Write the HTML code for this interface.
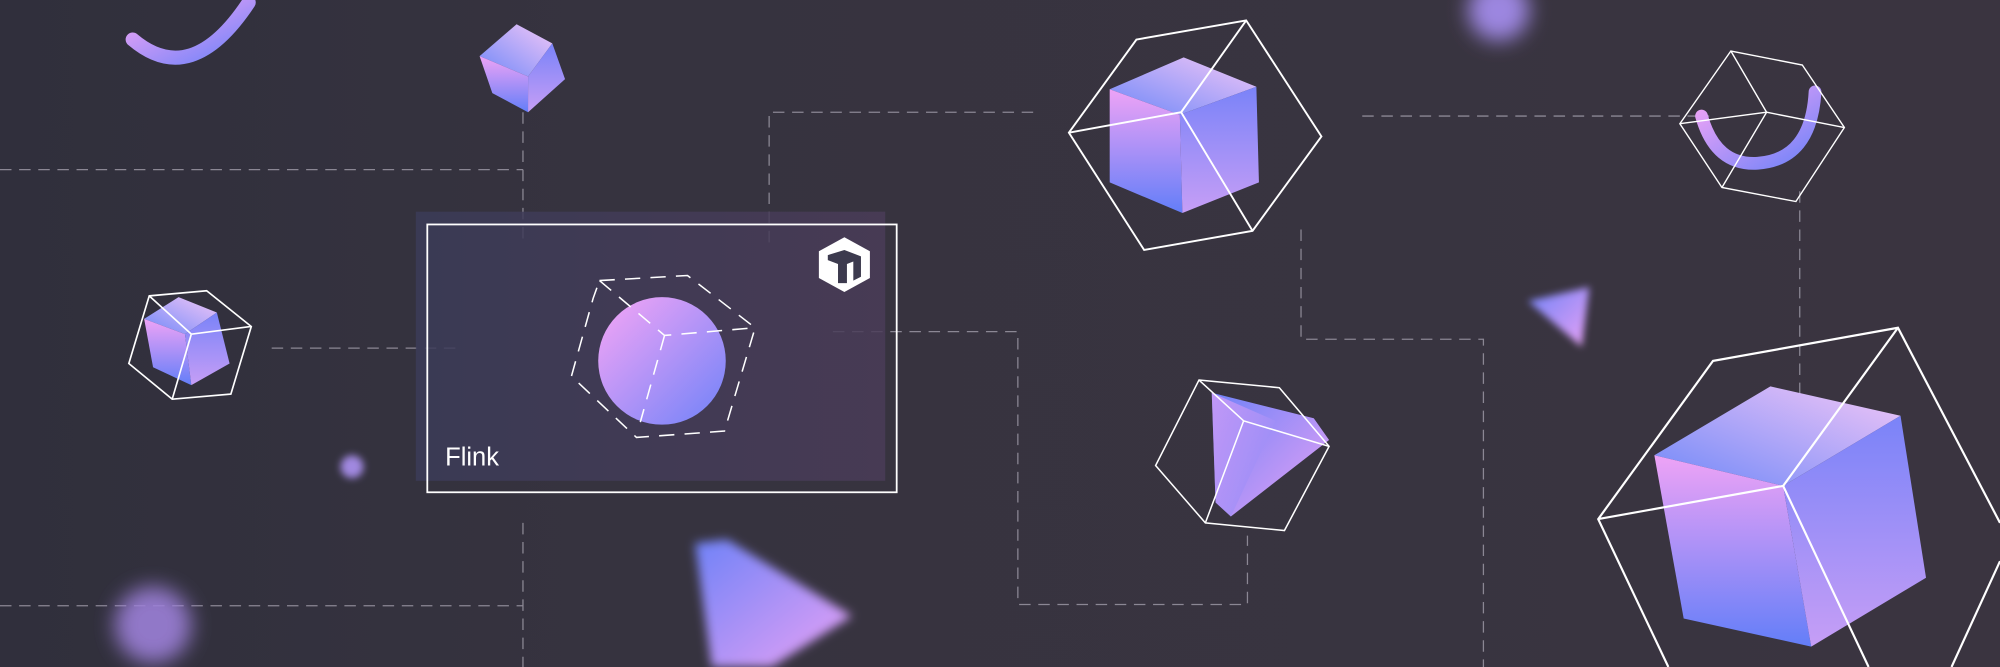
<!DOCTYPE html>
<html><head><meta charset="utf-8"><style>
html,body{margin:0;padding:0;width:2000px;height:667px;overflow:hidden;background:#37333f}
svg{display:block}
</style></head><body>
<svg width="2000" height="667" viewBox="0 0 1568 523" preserveAspectRatio="none" xmlns="http://www.w3.org/2000/svg">
<defs>
<linearGradient id="bg" x1="0" x2="1" y1="0" y2="0"><stop offset="0" stop-color="#302f3c"/><stop offset="0.3" stop-color="#36333f"/><stop offset="1" stop-color="#3a3440"/></linearGradient>
<linearGradient id="card" x1="0" x2="1"><stop offset="0" stop-color="#3b3b58"/><stop offset="1" stop-color="#4a3c58"/></linearGradient>
<linearGradient id="pb" x1="0" y1="0" x2="1" y2="1"><stop offset="0" stop-color="#f7a6f6"/><stop offset="1" stop-color="#6f82f8"/></linearGradient>
<linearGradient id="bp" x1="0" y1="0" x2="1" y2="1"><stop offset="0" stop-color="#6f82f8"/><stop offset="1" stop-color="#e9a2f5"/></linearGradient>
<linearGradient id="top" x1="0" y1="1" x2="1" y2="0"><stop offset="0" stop-color="#6f88f8"/><stop offset="1" stop-color="#f2c6f7"/></linearGradient>
<linearGradient id="lf" x1="0" y1="0" x2="0" y2="1"><stop offset="0" stop-color="#eea3f6"/><stop offset="1" stop-color="#637ef8"/></linearGradient>
<linearGradient id="rf" x1="0" y1="0" x2="0" y2="1"><stop offset="0" stop-color="#7a83f8"/><stop offset="1" stop-color="#c69ef6"/></linearGradient>
<filter id="b1" x="-1" y="-1" width="3" height="3"><feGaussianBlur stdDeviation="8"/></filter>
<filter id="b2" x="-1" y="-1" width="3" height="3"><feGaussianBlur stdDeviation="3"/></filter>
<filter id="b3" x="-1" y="-1" width="3" height="3"><feGaussianBlur stdDeviation="4"/></filter>
</defs>
<rect width="1568" height="523" fill="url(#bg)"/>
<g stroke="#8b8794" stroke-width="1" fill="none" stroke-dasharray="9 6">
<path d="M0 133H410M410 88V190M213 273H360M0 475H410M410 410V523"/>
<path d="M603 190V88H810"/>
<path d="M653 260H798V474H978V420"/>
<path d="M1020 180V266H1163V523"/>
<path d="M1068 91H1340M1411 150V310"/>
</g>
<!-- blobs -->
<circle cx="1175" cy="8" r="24" fill="#9c86e0" filter="url(#b1)"/>
<circle cx="120" cy="490" r="30" fill="#9c80d8" filter="url(#b1)" opacity="0.9"/>
<circle cx="276" cy="366" r="9" fill="#a088e0" filter="url(#b2)"/>
<polygon points="1198,236 1246,225 1240,272" fill="url(#bp)" filter="url(#b2)"/>
<polygon points="545,426 570,423 668,483 605,523 558,523" fill="url(#bp)" filter="url(#b3)"/>
<!-- top-left arc -->
<path d="M104 31 Q150 70 195 2" stroke="url(#pb)" stroke-width="11" fill="none" stroke-linecap="round"/>
<!-- small cube top -->
<polygon points="376,44 405,19 433,34 414,60" fill="url(#top)"/>
<polygon points="376,44 414,60 414,88 386,73" fill="url(#lf)"/>
<polygon points="414,60 433,34 443,62 414,88" fill="url(#rf)"/>
<!-- card -->
<rect x="326" y="166" width="368" height="211" fill="url(#card)" opacity="0.85"/>
<rect x="335" y="176" width="368" height="210" fill="none" stroke="#fff" stroke-width="1.4"/>
<text x="349" y="365" font-family="Liberation Sans, sans-serif" font-size="20" fill="#fff">Flink</text>
<polygon points="662,186 682,197 682,218 662,229 642,218 642,197" fill="#fff"/>
<path d="M649 200 L662 196 L675 201 L675 217 L669 220 L669 205 L664 207 L664 222 L657 222 L657 207 L649 204Z" fill="#3c3a4e"/>
<circle cx="519" cy="283" r="50" fill="url(#pb)"/>
<g stroke="#fff" stroke-width="1.2" fill="none" stroke-dasharray="12 8">
<polygon points="470,220 539,216 592,257 568,338 499,343 448,295 465,234"/>
<path d="M470,220 L521,263 L592,257 M521,263 L502,331"/>
</g>
<!-- left cube with wire -->
<polygon points="113,250 140,233 170,245 145,262" fill="url(#top)"/>
<polygon points="113,250 145,262 150,302 120,288" fill="url(#lf)"/>
<polygon points="145,262 170,245 180,285 150,302" fill="url(#rf)"/>
<g stroke="#fff" stroke-width="1.3" fill="none">
<polygon points="117,232 162,228 197,256 181,309 135,313 101,285"/>
<path d="M117,232 L150,262 L197,256 M150,262 L135,313"/>
</g>
<!-- big cube center -->
<polygon points="870,70 928,45 985,68 925,90" fill="url(#top)"/>
<polygon points="870,70 925,90 927,167 870,143" fill="url(#lf)"/>
<polygon points="925,90 985,68 987,143 927,167" fill="url(#rf)"/>
<g stroke="#fff" stroke-width="1.5" fill="none">
<polygon points="891,31 977,16 1036,107 982,181 897,196 838,104"/>
<path d="M838,104 L926,88 L977,16 M926,88 L982,181"/>
</g>
<!-- prism -->
<polygon points="950,308 1030,328 1042,345 965,405 953,394" fill="url(#bp)"/>
<polygon points="950,308 1000,330 965,405 953,394" fill="url(#pb)" opacity="0.6"/>
<g stroke="#fff" stroke-width="1.2" fill="none">
<polygon points="940,298 1003,304 1042,350 1007,416 945,410 906,365"/>
<path d="M940,298 L975,330 L1042,350 M975,330 L945,410"/>
</g>
<!-- arc top right -->
<path d="M1334 91 Q1345 130 1378 128 Q1420 125 1423 72" stroke="url(#pb)" stroke-width="10" fill="none" stroke-linecap="round"/>
<g stroke="#fff" stroke-width="1.1" fill="none">
<polygon points="1357,40 1413,51 1446,100 1408,158 1350,147 1317,97"/>
<path d="M1317,97 L1385,88 L1357,40 M1385,88 L1446,100 M1385,88 L1350,147"/>
</g>
<!-- big cube right -->
<polygon points="1297,357 1388,303 1490,326 1398,381" fill="url(#top)"/>
<polygon points="1297,357 1398,381 1420,507 1320,485" fill="url(#lf)"/>
<polygon points="1398,381 1490,326 1510,453 1420,507" fill="url(#rf)"/>
<g stroke="#fff" stroke-width="1.7" fill="none">
<polyline points="1308,523 1253,407 1343,283 1488,257 1568,410"/>
<path d="M1253,407 L1398,381 L1488,257 M1398,381 L1465,523 M1568,440 L1530,523"/>
</g>
</svg>
</body></html>
